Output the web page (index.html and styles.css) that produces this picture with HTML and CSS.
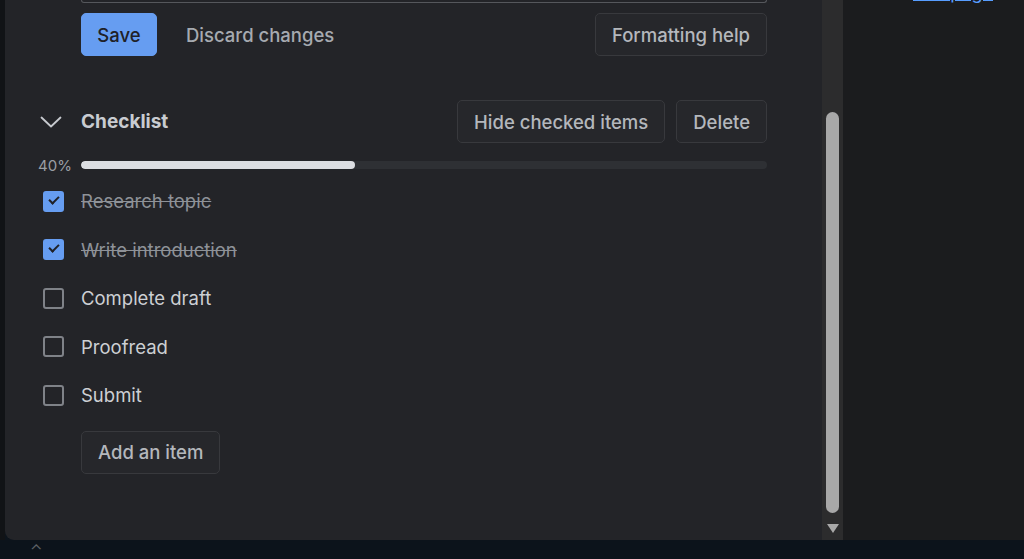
FILE: index.html
```html
<!DOCTYPE html>
<html lang="en">
<head>
    <meta charset="UTF-8">
    <meta name="viewport" content="width=device-width, initial-scale=1.0">
    <title>Card - Checklist</title>
    <link rel="stylesheet" href="styles.css">
</head>
<body>
    <div class="page">
        <div class="edge"></div>
        <div class="modal">
            <div class="content">
                <div class="gutter"></div>
                <div class="main editor-block">
                    <div class="editor"></div>
                    <div class="editor-actions">
                        <button class="btn btn-primary">Save</button>
                        <button class="btn btn-link">Discard changes</button>
                        <span class="spacer"></span>
                        <button class="btn">Formatting help</button>
                    </div>
                </div>

                <div class="gutter header-icon">
                    <svg width="22" height="12" viewBox="0 0 22 12">
                        <path d="M1.5 1.5 L11 10.5 L20.5 1.5" fill="none" stroke="#c7cacf" stroke-width="1.8" stroke-linecap="round" stroke-linejoin="round"/>
                    </svg>
                </div>
                <div class="main checklist-header">
                    <h3>Checklist</h3>
                    <span class="spacer"></span>
                    <button class="btn">Hide checked items</button>
                    <button class="btn">Delete</button>
                </div>

                <div class="gutter progress-label">40%</div>
                <div class="main progress-row">
                    <div class="progress">
                        <div class="progress-fill" style="width: 40%;"></div>
                    </div>
                </div>

                <div class="gutter item-check"><span class="checkbox checked"></span></div>
                <div class="main item done">Research topic</div>

                <div class="gutter item-check"><span class="checkbox checked"></span></div>
                <div class="main item done">Write introduction</div>

                <div class="gutter item-check"><span class="checkbox"></span></div>
                <div class="main item">Complete draft</div>

                <div class="gutter item-check"><span class="checkbox"></span></div>
                <div class="main item">Proofread</div>

                <div class="gutter item-check"><span class="checkbox"></span></div>
                <div class="main item">Submit</div>

                <div class="gutter"></div>
                <div class="main add-row">
                    <button class="btn">Add an item</button>
                </div>
            </div>
            <div class="scrollbar">
                <div class="thumb"></div>
                <div class="arrow"></div>
            </div>
        </div>
        <div class="side">
            <a class="side-link" href="#">Edit page</a>
        </div>
    </div>
    <div class="taskbar">
        <span class="caret">&#8963;</span>
    </div>
</body>
</html>
```

FILE: styles.css
```css
body {
    margin: 0;
    background-color: #0d141c;
    font-family: Inter, "Noto Sans", Arial, sans-serif;
    height: 559px;
    overflow: hidden;
}

.page {
    display: flex;
    height: 540px;
}

.edge {
    width: 5px;
    background-color: #111316;
}

.modal {
    width: 838px;
    display: flex;
    background-color: #232428;
    border-bottom-left-radius: 9px;
}

.content {
    flex: 1;
    display: grid;
    grid-template-columns: 41px 1fr;
    align-content: start;
    padding: 0 55px 0 35px;
}

.gutter {
    display: flex;
    align-items: center;
}

.main {
    display: flex;
    align-items: center;
}

.spacer {
    flex: 1;
}

/* editor */
.editor-block {
    flex-direction: column;
    align-items: stretch;
}

.editor {
    height: 2px;
    border: 1px solid #55575c;
    border-top: none;
    border-radius: 0 0 4px 4px;
}

.editor-actions {
    display: flex;
    align-items: center;
    margin-top: 10px;
}

.btn {
    font-family: inherit;
    font-size: 18.5px;
    font-weight: 500;
    height: 43px;
    padding: 0 16px;
    border-radius: 5px;
    border: 1px solid #38393d;
    background-color: #26272b;
    color: #b4b7bc;
    cursor: pointer;
}

.btn-primary {
    background-color: #669df1;
    border-color: #669df1;
    color: #1f2127;
    width: 76px;
    padding: 0;
}

.btn-link {
    background: none;
    border-color: transparent;
    color: #a6aab0;
    margin-left: 11px;
    padding: 0 17px;
}

/* checklist header */
.header-icon {
    margin-top: 44px;
}

.checklist-header {
    margin-top: 44px;
    gap: 11px;
}

.checklist-header h3 {
    margin: 0;
    font-size: 19px;
    font-weight: 700;
    color: #c9ccd1;
}

/* progress */
.progress-label,
.progress-row {
    margin-top: 14px;
    margin-bottom: 4px;
    height: 16px;
}

.progress-label {
    justify-content: flex-end;
    padding-right: 9px;
    margin-left: -6px;
    font-size: 15px;
    color: #9a9ea4;
}

.progress {
    flex: 1;
    height: 8px;
    border-radius: 4px;
    background-color: #2e3034;
    overflow: hidden;
}

.progress-fill {
    height: 100%;
    border-radius: 4px;
    background-color: #dcdee2;
}

/* items */
.item-check,
.item {
    height: 48.5px;
}

.item-check {
    padding-left: 3px;
}

.checkbox {
    width: 17px;
    height: 17px;
    border: 2px solid #7f8288;
    border-radius: 3px;
    position: relative;
}

.checkbox.checked {
    background-color: #669df1;
    border-color: #669df1;
}

.checkbox.checked::after {
    content: "";
    position: absolute;
    left: 4px;
    top: 3px;
    width: 8px;
    height: 4px;
    border-left: 2px solid #1f2127;
    border-bottom: 2px solid #1f2127;
    transform: rotate(-45deg);
}

.item {
    font-size: 18.5px;
    color: #cdd0d4;
}

.item.done {
    color: #8e9298;
    text-decoration: line-through;
}

.add-row {
    margin-top: 11px;
}

/* scrollbar */
.scrollbar {
    width: 21px;
    background-color: #2c2c2d;
    display: flex;
    flex-direction: column;
    align-items: center;
}

.thumb {
    margin-top: 112px;
    width: 13px;
    height: 401px;
    border-radius: 7px;
    background-color: #a8a8a8;
}

.arrow {
    margin-top: 11px;
    width: 0;
    height: 0;
    border-left: 6px solid transparent;
    border-right: 6px solid transparent;
    border-top: 9px solid #a8a8a8;
}

/* right side */
.side {
    flex: 1;
    background-color: #1b1c1e;
    padding-left: 70px;
}

.side-link {
    display: block;
    margin-top: -18px;
    font-size: 18px;
    color: #579dff;
}

.taskbar {
    height: 19px;
    background-color: #0c131b;
    padding-left: 30px;
}

.caret {
    color: #5d6166;
    font-size: 16px;
    line-height: 19px;
}
```
